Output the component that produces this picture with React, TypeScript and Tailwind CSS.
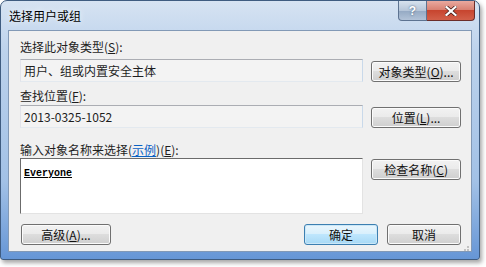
import React from 'react';

const FONT = "font-['Noto_Sans_CJK_SC','Noto_Sans',sans-serif]";

const Btn: React.FC<{ label: React.ReactNode; primary?: boolean; narrow?: boolean; className?: string }> = ({
  label,
  primary,
  narrow,
  className = '',
}) => (
  <div
    className={`h-[21px] ${narrow ? 'w-[74px]' : 'w-[90px]'} rounded-[3px] border flex items-center justify-center text-[12px] leading-none text-[#111] ${
      primary
        ? 'border-[#3c7fb1] bg-[linear-gradient(#eaf6fd_0%,#d9f0fc_45%,#bee6fd_50%,#a7d9f5_100%)] shadow-[inset_0_0_0_1px_#cbe7f7]'
        : 'border-[#707070] bg-[linear-gradient(#f2f2f2_0%,#ebebeb_45%,#dddddd_50%,#cfcfcf_100%)] shadow-[inset_0_0_0_1px_#fbfbfb]'
    } ${className}`}
  >
    {label}
  </div>
);

export default function App() {
  return (
    <div className={`w-[486px] h-[267px] bg-white ${FONT}`}>
      {/* window frame */}
      <div className="w-[480px] h-[260px] rounded-t-[7px] rounded-b-[3px] border border-[#3f5c80] bg-[linear-gradient(#d6e3f2_0%,#bcd2ec_20%,#a2c1e6_70%,#6696d6_100%)] shadow-[2px_3px_4px_rgba(0,0,0,0.35)] flex flex-col">
        {/* title bar */}
        <div className="h-[29px] flex items-start">
          <div className="pl-[8px] pt-[7px] text-[12px] leading-[16px] text-black [text-shadow:0_0_6px_#fff]">选择用户或组</div>
          <div className="ml-auto mr-[4px] flex">
            <div className="w-[29px] h-[20px] rounded-bl-[4px] border border-t-0 border-[#5d7391] bg-[linear-gradient(#d7e2ee_0%,#b6c6d9_50%,#94a9c3_51%,#b2c3d8_100%)] flex items-center justify-center text-white font-bold text-[12px] font-['Liberation_Sans',sans-serif] [text-shadow:0_0_2px_#34506f]">
              ?
            </div>
            <div className="w-[48px] h-[20px] rounded-br-[4px] border border-t-0 border-l-0 border-[#6b2d2a] bg-[linear-gradient(#e9a99f_0%,#d98273_45%,#c7452f_50%,#d2604a_100%)] flex items-center justify-center">
              <svg width="12" height="10" viewBox="0 0 12 10">
                <path d="M1.5 1 L10.5 9 M10.5 1 L1.5 9" stroke="#3a1410" strokeWidth="3.6" strokeLinecap="square" />
                <path d="M1.5 1 L10.5 9 M10.5 1 L1.5 9" stroke="#fff" strokeWidth="2.2" strokeLinecap="square" />
              </svg>
            </div>
          </div>
        </div>

        {/* client area */}
        <div className="mx-[7px] mb-[7px] flex-1 border border-[#8299b6] bg-[#f0f0f0] pl-[11px] pr-[10px] pt-[9px] flex flex-col text-[12px] leading-[14px] text-[#1e1e1e]">
          <div>选择此对象类型(<span className="underline">S</span>):</div>
          <div className="mt-[5px] flex items-end gap-[8px]">
            <div className="w-[344px] h-[23px] border border-[#abadb3] border-b-[#e3e9ef] border-l-[#e2e3ea] border-r-[#c9d9ea] bg-[#f3f3f3] pl-[3px] flex items-center">
              用户、组或内置安全主体
            </div>
            <Btn label={<span>对象类型(<span className="underline">O</span>)...</span>} />
          </div>

          <div className="mt-[7px]">查找位置(<span className="underline">F</span>):</div>
          <div className="mt-[2px] flex items-end gap-[8px]">
            <div className="w-[344px] h-[23px] border border-[#abadb3] border-b-[#e3e9ef] border-l-[#e2e3ea] border-r-[#c9d9ea] bg-[#f3f3f3] pl-[3px] flex items-center">
              2013-0325-1052
            </div>
            <Btn label={<span>位置(<span className="underline">L</span>)...</span>} />
          </div>

          <div className="mt-[15px]">
            输入对象名称来选择(<span className="text-[#0b62c4] underline">示例</span>)(<span className="underline">E</span>):
          </div>
          <div className="mt-[1px] flex items-start gap-[8px]">
            <div className="w-[344px] h-[56px] border border-[#e3e3e3] border-t-[#6b6b6b] border-l-[#6b6b6b] bg-white pl-[3px] pt-[5px]">
              <span className="font-['Liberation_Mono',monospace] font-bold text-[10px] underline text-black">Everyone</span>
            </div>
            <Btn className="mt-[1px]" label={<span>检查名称(<span className="underline">C</span>)</span>} />
          </div>

          <div className="mt-[10px] flex items-center">
            <Btn label={<span>高级(<span className="underline">A</span>)...</span>} className="ml-[1px]" />
            <div className="ml-auto flex gap-[9px]">
              <Btn primary narrow label="确定" />
              <Btn narrow label="取消" />
            </div>
          </div>

          <div className="ml-auto mr-[-8px] mt-[1px] grid grid-cols-3 gap-[1px] w-[8px]">
            <span />
            <span />
            <span className="w-[2px] h-[2px] bg-[#c2c2c2]" />
            <span />
            <span className="w-[2px] h-[2px] bg-[#c2c2c2]" />
            <span className="w-[2px] h-[2px] bg-[#c2c2c2]" />
          </div>
        </div>
      </div>
    </div>
  );
}
